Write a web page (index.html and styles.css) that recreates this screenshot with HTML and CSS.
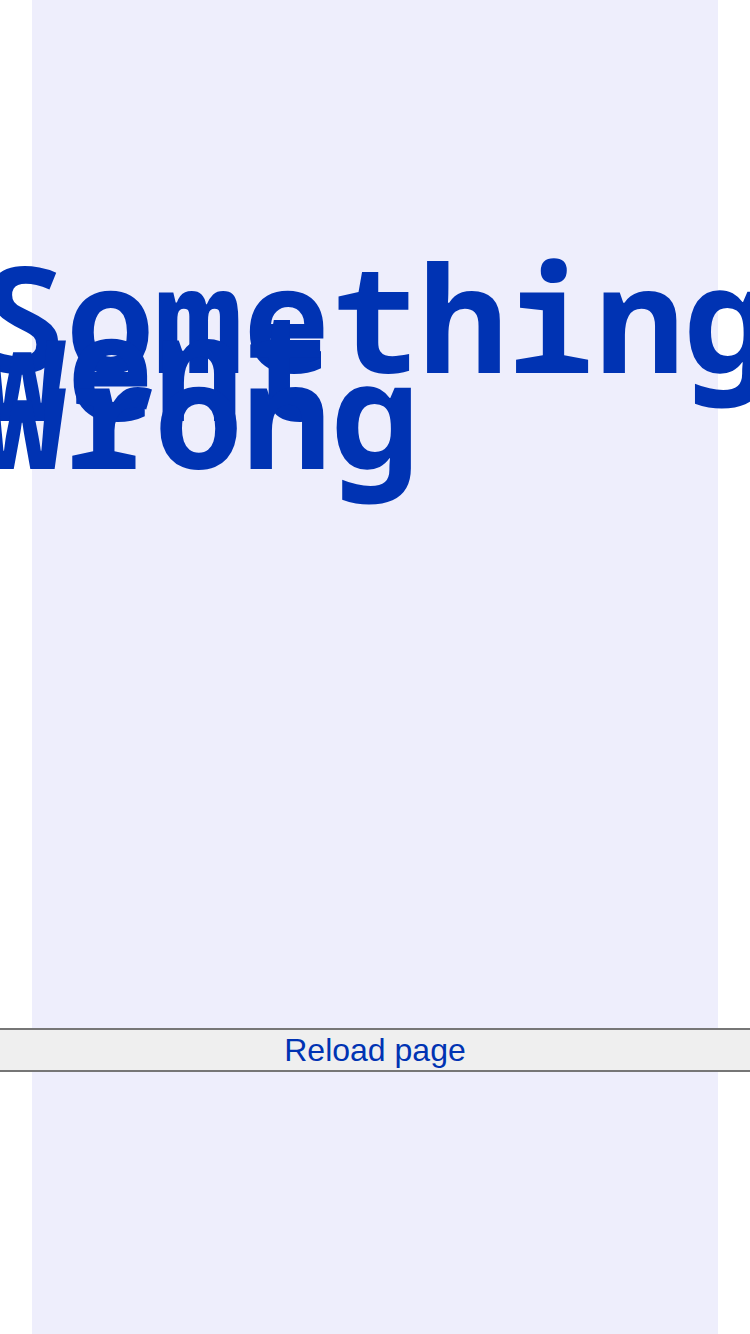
FILE: index.html
```html
<!DOCTYPE html>
<html lang="en">
<head>
<meta charset="utf-8">
<title>Something went wrong</title>
<link rel="stylesheet" href="styles.css">
</head>
<body>
<main class="error-page">
  <h1 class="error-title">Something went wrong</h1>
  <button class="reload-button" type="button">Reload page</button>
</main>
</body>
</html>
```

FILE: styles.css
```css
html, body {
  margin: 0;
  padding: 0;
  background: #ffffff;
}

.error-page {
  margin: 0 32px;
  min-height: 1334px;
  background: #eeeefc;
  display: flex;
  flex-direction: column;
  padding-top: 292px;
  box-sizing: border-box;
}

.error-title {
  margin: 0 0 0 -54px;
  font-family: "Noto Sans Mono", "DejaVu Sans Mono", monospace;
  font-weight: bold;
  font-size: 147px;
  line-height: 48px;
  color: #0033b3;
  white-space: normal;
}

.reload-button {
  margin: 592px -40px 0;
  width: 830px;
  align-self: center;
  height: 44px;
  padding: 0;
  background: #efefef;
  border: none;
  border-top: 2px solid #767676;
  border-bottom: 2px solid #767676;
  font-family: "Liberation Sans", Arial, sans-serif;
  font-size: 32px;
  color: #0033b3;
}
```
